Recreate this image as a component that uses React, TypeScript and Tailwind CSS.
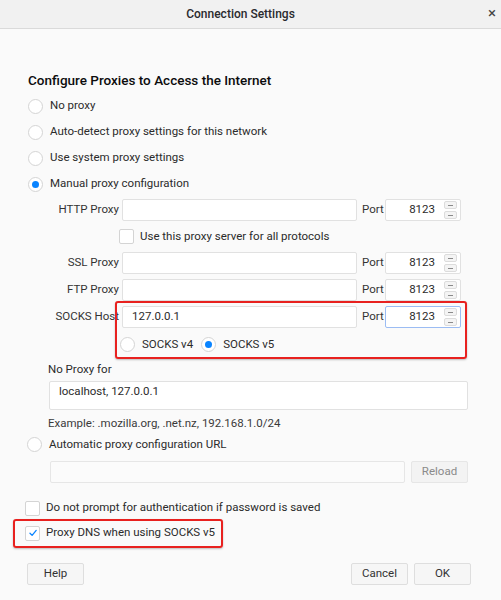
import React from "react";

const font = { fontFamily: 'Roboto, "Liberation Sans", Arial, sans-serif' };

function Radio({ checked = false }: { checked?: boolean }) {
  return (
    <span className="flex h-[15px] w-[15px] shrink-0 items-center justify-center rounded-full border border-[#d4d4d4] bg-white">
      {checked && <span className="h-[7px] w-[7px] rounded-full bg-[#0a84ff]" />}
    </span>
  );
}

function Checkbox({ checked = false }: { checked?: boolean }) {
  return (
    <span className="flex h-[15px] w-[15px] shrink-0 items-center justify-center rounded-[2px] border border-[#d4d4d4] bg-white">
      {checked && (
        <svg width="10" height="10" viewBox="0 0 10 10">
          <path d="M2 5.3 L4.1 7.4 L8.2 2.4" fill="none" stroke="#0a84ff" strokeWidth="1.3" strokeLinecap="round" strokeLinejoin="round" />
        </svg>
      )}
    </span>
  );
}

function Spinner() {
  return (
    <div className="flex flex-col gap-[2px]">
      <span className="flex h-[8px] w-[13px] items-center justify-center rounded-[2px] border border-[#dcdcdc] bg-[#f4f4f4]">
        <span className="h-px w-[5px] bg-[#8a8a8a]" />
      </span>
      <span className="flex h-[8px] w-[13px] items-center justify-center rounded-[2px] border border-[#dcdcdc] bg-[#f4f4f4]">
        <span className="h-px w-[5px] bg-[#8a8a8a]" />
      </span>
    </div>
  );
}

function ProxyRow({ label, value = "", focused = false }: { label: string; value?: string; focused?: boolean }) {
  return (
    <div className="flex h-[22px] items-center">
      <div className="w-[119px] text-right text-[11.5px] text-[#333]">{label}</div>
      <div className="ml-[3px] flex h-[22px] w-[235px] items-center rounded-[2px] border border-[#e1e1e1] bg-white pl-[9px] text-[11.5px] text-[#2b2b2b]">
        {value}
      </div>
      <div className="ml-[5px] w-[23px] text-[11.5px] text-[#333]">Port</div>
      <div
        className={
          focused
            ? "flex h-[22px] w-[76px] items-center justify-end rounded-[2px] border border-[#9bbcf3] bg-white pr-[3px] text-[11.5px] text-[#2b2b2b]"
            : "flex h-[22px] w-[76px] items-center justify-end rounded-[2px] border border-[#e1e1e1] bg-white pr-[3px] text-[11.5px] text-[#2b2b2b]"
        }
      >
        <span className="mr-[9px]">8123</span>
        <Spinner />
      </div>
    </div>
  );
}

function Button({ children, disabled = false, w = "w-[57px]" }: { children: React.ReactNode; disabled?: boolean; w?: string }) {
  return (
    <div
      className={
        (disabled
          ? "text-[#8a8a8a] bg-[#f3f3f3] border-[#e6e6e6] "
          : "text-[#333] bg-[#f6f6f6] border-[#dedede] ") +
        w +
        " flex h-[22px] items-center justify-center rounded-[2px] border text-[11.5px]"
      }
    >
      {children}
    </div>
  );
}

export default function App() {
  return (
    <div style={font} className="relative h-[600px] w-[501px] overflow-hidden bg-[#fafafa] text-[#2b2b2b]">
      {/* Title bar */}
      <div className="relative flex h-[29px] items-center justify-center border-b border-[#dadada] bg-[#f1f1f1] pr-[20px]">
        <span className="text-[12px] font-medium text-[#2a2a2e]">Connection Settings</span>
        <span className="absolute right-[5px] top-[5px] text-[15px] leading-[16px] text-[#444]">×</span>
      </div>

      <div className="pl-[28px] pt-[42px]">
        <div className="text-[13.5px] font-medium leading-[18px] text-[#0c0c0d]">Configure Proxies to Access the Internet</div>

        <div className="mt-[4px] flex flex-col">
          {["No proxy", "Auto-detect proxy settings for this network", "Use system proxy settings", "Manual proxy configuration"].map(
            (t, i) => (
              <div key={t} className="flex h-[26px] items-center gap-[7px] text-[11.5px] text-[#2b2b2b]">
                <Radio checked={i === 3} />
                <span>{t}</span>
              </div>
            )
          )}
        </div>
      </div>

      <div className="mt-[2px] flex flex-col">
        <ProxyRow label="HTTP Proxy" />
        <div className="mt-[7px] flex h-[17px] items-center pl-[119px]">
          <Checkbox />
          <span className="ml-[6px] text-[11.5px] text-[#2b2b2b]">Use this proxy server for all protocols</span>
        </div>
        <div className="mt-[7px]">
          <ProxyRow label="SSL Proxy" />
        </div>
        <div className="mt-[5px]">
          <ProxyRow label="FTP Proxy" />
        </div>
        <div className="mt-[5px]">
          <ProxyRow label="SOCKS Host" value="127.0.0.1" focused />
        </div>
        <div className="mt-[8px] flex h-[17px] items-center pl-[120px] text-[11.5px] text-[#2b2b2b]">
          <Radio />
          <span className="ml-[7px]">SOCKS v4</span>
          <span className="ml-[8px]">
            <Radio checked />
          </span>
          <span className="ml-[7px]">SOCKS v5</span>
        </div>
      </div>

      <div className="pl-[48px]">
        <div className="mt-[9px] text-[11.5px] leading-[14px] text-[#2b2b2b]">No Proxy for</div>
        <div className="ml-px mt-[5px] h-[29px] w-[419px] rounded-[2px] border border-[#e1e1e1] bg-white pl-[9px] pt-px text-[11.5px] text-[#2b2b2b]">
          localhost, 127.0.0.1
        </div>
        <div className="mt-[6px] text-[11.5px] leading-[14px] text-[#3a3a3a]">Example: .mozilla.org, .net.nz, 192.168.1.0/24</div>
      </div>

      <div className="pl-[27px]">
        <div className="mt-[6px] flex h-[17px] items-center gap-[7px] text-[11.5px] text-[#2b2b2b]">
          <Radio />
          <span>Automatic proxy configuration URL</span>
        </div>
        <div className="mt-[8px] flex items-center pl-[23px]">
          <div className="h-[22px] w-[355px] rounded-[2px] border border-[#e6e6e6] bg-[#fbfbfb]" />
          <div className="ml-[6px]">
            <Button disabled>Reload</Button>
          </div>
        </div>
      </div>

      <div className="pl-[25px]">
        <div className="mt-[17px] flex h-[16px] items-center gap-[6px] text-[11.5px] text-[#2b2b2b]">
          <Checkbox />
          <span>Do not prompt for authentication if password is saved</span>
        </div>
        <div className="mt-[9px] flex h-[16px] items-center gap-[6px] text-[11.5px] text-[#2b2b2b]">
          <Checkbox checked />
          <span>Proxy DNS when using SOCKS v5</span>
        </div>
      </div>

      <div className="mt-[22px] flex items-center pl-[27px] pr-[30px]">
        <Button>Help</Button>
        <div className="flex-1" />
        <Button>Cancel</Button>
        <div className="ml-[6px]">
          <Button>OK</Button>
        </div>
      </div>

      {/* Red highlight annotations */}
      <div className="pointer-events-none absolute left-[115px] top-[301px] h-[58px] w-[352px] rounded-[3px] border-2 border-[#e8211f] shadow-[0_1px_2px_rgba(0,0,0,0.25)]" />
      <div className="pointer-events-none absolute left-[13px] top-[519px] h-[29px] w-[210px] rounded-[3px] border-2 border-[#e8211f] shadow-[0_1px_2px_rgba(0,0,0,0.25)]" />
    </div>
  );
}
